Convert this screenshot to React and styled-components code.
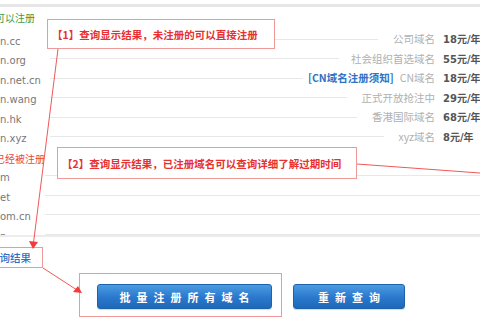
import React from "react";
import styled, { createGlobalStyle } from "styled-components";

const GlobalStyle = createGlobalStyle`
  html, body { margin: 0; padding: 0; background: #fff; }
  body { overflow: hidden; font-family: "DejaVu Sans", "Noto Sans CJK SC", sans-serif; }
`;

const Page = styled.div`
  position: relative;
  width: 480px;
  height: 320px;
  overflow: hidden;
  background: #fff;
`;

const TopBand = styled.div`
  margin-top: 4px;
  height: 3px;
  background: #e6e6e6;
`;

const List = styled.div`
  height: 228px;
  overflow: hidden;
  border-bottom: 2px solid #ececec;
`;

const GroupHeader = styled.div`
  display: flex;
  align-items: center;
  height: ${(p) => p.$h}px;
  padding-bottom: ${(p) => p.$pb || 0}px;
  box-sizing: border-box;
  margin-left: -5px;
  font-family: "Noto Sans CJK SC", sans-serif;
  font-size: 10px;
  color: ${(p) => p.$color};
  white-space: nowrap;
`;

const Row = styled.div`
  display: flex;
  align-items: center;
  height: 19.5px;
  white-space: nowrap;
`;

const Name = styled.div`
  flex-shrink: 0;
  width: ${(p) => p.$w}px;
  font-size: 10px;
  color: #777;
`;

const Leader = styled.div`
  flex: 1;
  height: 1px;
  background: #e8e8e8;
  margin-bottom: 4px;
  margin-right: ${(p) => p.$mr || 0}px;
`;

const Notice = styled.span`
  font-family: "Noto Sans CJK SC", sans-serif;
  font-size: 10.5px;
  font-weight: 700;
  color: #2f72c6;
  margin-right: 6px;
  margin-bottom: 5px;
`;

const Label = styled.span`
  font-family: "Noto Sans CJK SC", sans-serif;
  font-size: 10.5px;
  color: #b0b0b0;
  margin-right: 8px;
  margin-bottom: 5px;
`;

const Price = styled.span`
  flex-shrink: 0;
  width: 37px;
  font-family: "DejaVu Sans", "Noto Sans CJK SC", sans-serif;
  font-size: 10px;
  font-weight: 700;
  color: #555;
  margin-bottom: 5px;
  overflow: visible;
`;

const Note = styled.div`
  position: absolute;
  left: ${(p) => p.$x}px;
  top: ${(p) => p.$y}px;
  width: ${(p) => p.$w}px;
  height: ${(p) => p.$h}px;
  box-sizing: border-box;
  border: 1px solid #f09898;
  background: ${(p) => (p.$clear ? "transparent" : "#fff")};
  display: flex;
  align-items: center;
  padding-left: ${(p) => p.$pl || 0}px;
  font-family: "Noto Sans CJK SC", sans-serif;
  font-size: 10.5px;
  font-weight: 700;
  color: #e83030;
  white-space: nowrap;
  overflow: hidden;
`;

const ResultTag = styled.span`
  margin-left: -11px;
  color: #2e6fc4;
  font-weight: 500;
`;

const Lines = styled.svg`
  position: absolute;
  left: 0;
  top: 0;
  pointer-events: none;
`;

const Actions = styled.div`
  position: absolute;
  left: 97px;
  top: 284px;
  display: flex;
  align-items: center;
  gap: 21px;
`;

const Button = styled.button`
  width: ${(p) => p.$w}px;
  height: 25px;
  padding: 0 0 0 ${(p) => p.$ls}px;
  border: 1px solid #1d62ad;
  border-radius: 3px;
  background: linear-gradient(#4a9be2, #2a78cc 55%, #1f68b8);
  color: #fff;
  font-family: "Noto Sans CJK SC", sans-serif;
  font-size: 11px;
  font-weight: 700;
  letter-spacing: ${(p) => p.$ls}px;
  box-shadow: 0 1px 1px rgba(0, 0, 0, 0.15);
  cursor: pointer;
`;

const available = [
  { name: "n.cc", label: "公司域名", price: "18元/年", mr: 15 },
  { name: "n.org", label: "社会组织首选域名", price: "55元/年", mr: 12 },
  { name: "n.net.cn", label: "CN域名", price: "18元/年", mr: 5, notice: "[CN域名注册须知]" },
  { name: "n.wang", label: "正式开放抢注中", price: "29元/年", mr: 15 },
  { name: "n.hk", label: "香港国际域名", price: "68元/年", mr: 15 },
  { name: "n.xyz", label: "xyz域名", price: "8元/年", mr: 15 },
];

const registered = ["m", "et", "om.cn", "n"];

export default function App() {
  return (
    <Page>
      <GlobalStyle />
      <TopBand />
      <List>
        <GroupHeader $h={24.5} $pb={4} $color="#3f9c3f">可以注册</GroupHeader>
        {available.map((r) => (
          <Row key={r.name}>
            <Name $w={50}>{r.name}</Name>
            <Leader $mr={r.mr} />
            {r.notice && <Notice>{r.notice}</Notice>}
            <Label>{r.label}</Label>
            <Price>{r.price}</Price>
          </Row>
        ))}
        <GroupHeader $h={19.5} $color="#e8493c">已经被注册</GroupHeader>
        {registered.map((n) => (
          <Row key={n}>
            <Name $w={45}>{n}</Name>
            <Leader />
          </Row>
        ))}
      </List>

      <Note $x={47} $y={19} $w={228} $h={30} $pl={4}>
        【1】查询显示结果，未注册的可以直接注册
      </Note>
      <Note $x={57} $y={147} $w={300} $h={32} $pl={4}>
        【2】查询显示结果，已注册域名可以查询详细了解过期时间
      </Note>
      <Note $x={-1} $y={247} $w={44} $h={21}>
        <ResultTag>查询结果</ResultTag>
      </Note>
      <Note $x={79} $y={273} $w={203} $h={44} $clear />

      <Actions>
        <Button $w={175} $ls={6}>批量注册所有域名</Button>
        <Button $w={112} $ls={6}>重新查询</Button>
      </Actions>

      <Lines width="480" height="320" viewBox="0 0 480 320">
        <g stroke="#f05858" strokeWidth="1" fill="none">
          <line x1="58" y1="49" x2="33.6" y2="242" />
          <line x1="357" y1="164" x2="480" y2="173" />
          <line x1="43" y1="268" x2="77" y2="290" />
        </g>
        <g fill="#f03c3c">
          <polygon points="29,241 38,242 33,249" />
          <polygon points="73,292 78,286 82,293" />
        </g>
      </Lines>
    </Page>
  );
}
